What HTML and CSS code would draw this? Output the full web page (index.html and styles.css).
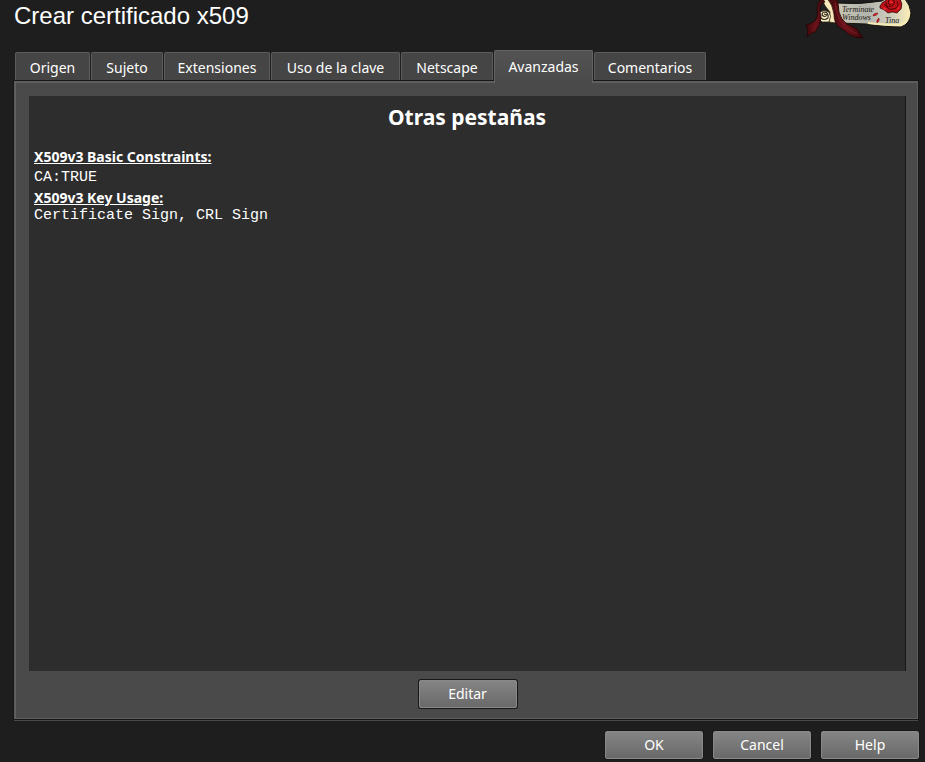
FILE: index.html
```html
<!DOCTYPE html>
<html lang="es">
<head>
<meta charset="utf-8">
<title>Crear certificado x509</title>
<link rel="stylesheet" href="styles.css">
</head>
<body>
<main class="dialog">
  <header class="header">
    <h1 class="title">Crear certificado x509</h1>
    <svg class="logo" viewBox="0 0 112 42" aria-hidden="true">
      <defs>
        <linearGradient id="paper" x1="0" y1="0" x2="1" y2="0">
          <stop offset="0" stop-color="#c9c8b4"/>
          <stop offset=".4" stop-color="#b4b4ae"/>
          <stop offset=".75" stop-color="#d0cebd"/>
          <stop offset="1" stop-color="#fff0b8"/>
        </linearGradient>
        <linearGradient id="ribbon" x1="0" y1="0" x2="1" y2="0">
          <stop offset="0" stop-color="#3c080b"/>
          <stop offset=".5" stop-color="#6c131a"/>
          <stop offset="1" stop-color="#3c080b"/>
        </linearGradient>
      </defs>
      <path d="M34 3Q58 5 80 1L86-3L103-1Q108 5 109 13Q108 24 99 27Q84 27 64 24L38 23Z" fill="url(#paper)" stroke="#15120c" stroke-width="1"/>
      <path d="M66 23Q84 25 98 25Q106 22 107 13" fill="none" stroke="#f5e9b4" stroke-width="2"/>
      <path d="M19-2L29-2Q34 8 34 23L27 22L28 12Q23 7 19-2Z" fill="#f7e9b9" stroke="#2a2114" stroke-width=".7"/>
      <path d="M18 12Q22 9 27 12Q30 16 27 22L20 22Q15 18 18 12Z" fill="#f8edc4" stroke="#2a2114" stroke-width=".8"/>
      <path d="M19 18Q22 21 26 18Q27 13 23 12Q20 12 20 15Q23 18 25 15L22 14" fill="none" stroke="#30291c" stroke-width="1.1"/>
      <path d="M20-2Q15 3 15 9Q17 16 13 21Q9 24 4 25Q7 30 5 37Q8 33 13 32Q19 25 19 17Q17 10 18 6Q20 2 23 2Z" fill="url(#ribbon)" stroke="#220305" stroke-width=".8"/>
      <path d="M25-2L34-2Q37 4 37 12Q39 20 45 24Q52 28 55 29Q58 33 61 38Q53 38 48 35Q44 31 37 27Q32 23 32 14Q31 5 25-2Z" fill="url(#ribbon)" stroke="#220305" stroke-width=".8"/>
      <path d="M33 3Q35 16 39 22Q46 30 55 34" fill="none" stroke="#86202a" stroke-width=".8"/>
      <g class="logo-script">
        <text x="40" y="12">Terminate</text>
        <text x="40" y="20">Windows</text>
        <text x="83" y="23">Tina</text>
      </g>
      <path d="M78 6Q80 2 83 1L87-2L98-1Q101 4 99 9L95 13Q90 11 86 13Q82 9 78 8Z" fill="#bd1017" stroke="#33070a" stroke-width=".8"/>
      <path d="M82 4Q86 9 91 5Q94 1 90-1M84 2Q84 11 91 9Q98 8 95 1M87 0Q85 5 89 5" fill="none" stroke="#4d0307" stroke-width="1"/>
      <path d="M87 1Q91 1 91 3Q89 4 87 1ZM80 7L86 9L82 10ZM95 8L98 6L96 10Z" fill="#ef2930"/>
      <path d="M76 13Q71 13 71 16Q75 16 76 13ZM77 18Q74 20 75 23Q78 21 77 18Z" fill="#d71b20" stroke="#4d090b" stroke-width=".4"/>
    </svg>
  </header>

  <div class="tabs" role="tablist">
    <button class="tab" role="tab" type="button">Origen</button>
    <button class="tab" role="tab" type="button">Sujeto</button>
    <button class="tab" role="tab" type="button">Extensiones</button>
    <button class="tab" role="tab" type="button">Uso de la clave</button>
    <button class="tab" role="tab" type="button">Netscape</button>
    <button class="tab tab-active" role="tab" type="button" id="tab-avanzadas" aria-selected="true" aria-controls="panel">Avanzadas</button>
    <button class="tab" role="tab" type="button">Comentarios</button>
  </div>

  <section class="panel" id="panel" role="tabpanel" aria-labelledby="tab-avanzadas">
    <div class="viewer">
      <h2 class="viewer-title">Otras pestañas</h2>
      <h3 class="ext-name">X509v3 Basic Constraints:</h3>
      <p class="ext-value ext-value-tall">CA:TRUE</p>
      <h3 class="ext-name">X509v3 Key Usage:</h3>
      <p class="ext-value">Certificate Sign, CRL Sign</p>
    </div>
    <button class="button" type="button">Editar</button>
  </section>

  <footer class="footer">
    <button class="button" type="button">OK</button>
    <button class="button" type="button">Cancel</button>
    <button class="button" type="button">Help</button>
  </footer>
</main>
</body>
</html>
```
FILE: styles.css
```css
* {
  box-sizing: border-box;
}

body {
  margin: 0;
  background: #1e1e1e;
  color: #fff;
  font: 14px/20px "Noto Sans", "Open Sans", sans-serif;
}

h1, h2, h3, p {
  margin: 0;
}

button {
  color: inherit;
  font: inherit;
}

.dialog {
  display: flex;
  flex-direction: column;
  min-height: 100vh;
  padding: 0 6px 3px 14px;
}

.header {
  display: flex;
  justify-content: space-between;
  height: 50px;
  padding-right: 5px;
}

.title {
  padding-top: 2px;
  font: 24px/28px "Liberation Sans", Arial, sans-serif;
}

.logo {
  width: 112px;
  height: 42px;
}

.logo-script {
  fill: #17170f;
  font: italic 8px "Liberation Serif", serif;
}

.tabs {
  display: grid;
  grid-template-columns: 75px 72px 106px 129px 92px 99px 112px;
  column-gap: 1px;
  align-items: end;
  height: 31px;
  padding-left: 1px;
}

.tab {
  height: 28px;
  margin-bottom: 1px;
  padding: 2px 0 0;
  border: 1px solid #5c5c5c;
  border-bottom: 0;
  border-radius: 2px 2px 0 0;
  background: #454545;
  white-space: nowrap;
}

.tab-active {
  z-index: 1;
  height: 33px;
  margin-bottom: -2px;
  padding: 0;
  border-color: #646464;
  background: linear-gradient(#535353, #4a4a4a);
}

.panel {
  display: flex;
  flex: 1;
  flex-direction: column;
  align-items: center;
  margin-right: 1px;
  padding: 13px 11px 10px 13px;
  border: 1px solid #5e5e5e;
  border-width: 2px 1px 1px 2px;
  background: #4a4a4a;
  box-shadow: 0 0 0 1px #161616, 0 2px 0 #484848;
}

.viewer {
  flex: 1;
  align-self: stretch;
  margin-bottom: 9px;
  padding: 5px;
  border-right: 1px solid #181818;
  background: #2d2d2d;
}

.viewer-title {
  margin-bottom: 14px;
  font-size: 21px;
  line-height: 32px;
  text-align: center;
}

.ext-name {
  font-size: 14px;
  line-height: 20px;
  text-decoration: underline;
}

.ext-value {
  font: 15px/16px "Liberation Mono", monospace;
}

.ext-value-tall {
  line-height: 21px;
}

.button {
  width: 98px;
  height: 28px;
  padding: 0;
  border: 1px solid #8a8a8a;
  border-radius: 2px;
  background: linear-gradient(#858585, #696969);
  box-shadow: 0 0 0 1px #181818;
}

.footer {
  display: flex;
  justify-content: flex-end;
  gap: 10px;
  padding-top: 12px;
}
```
